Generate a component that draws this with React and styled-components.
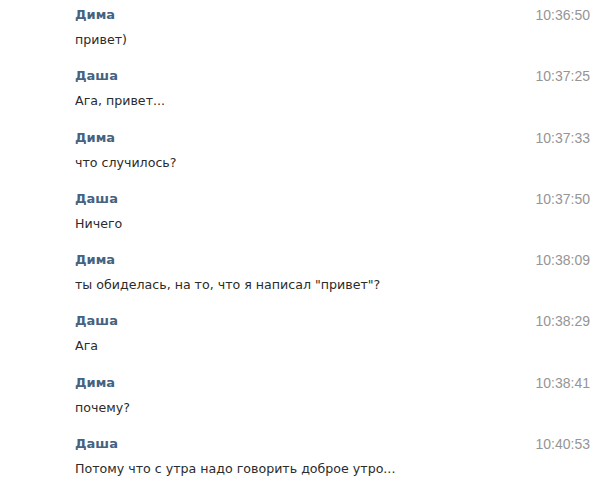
import { createGlobalStyle, styled } from 'styled-components'

const GlobalStyle = createGlobalStyle`
    body {
        margin: 0;
        background: #ffffff;
        font-family: "DejaVu Sans", "Liberation Sans", sans-serif;
    }
`

const messages = [
    { name: 'Дима', time: '10:36:50', text: 'привет)' },
    { name: 'Даша', time: '10:37:25', text: 'Ага, привет...' },
    { name: 'Дима', time: '10:37:33', text: 'что случилось?' },
    { name: 'Даша', time: '10:37:50', text: 'Ничего' },
    { name: 'Дима', time: '10:38:09', text: 'ты обиделась, на то, что я написал "привет"?' },
    { name: 'Даша', time: '10:38:29', text: 'Ага' },
    { name: 'Дима', time: '10:38:41', text: 'почему?' },
    { name: 'Даша', time: '10:40:53', text: 'Потому что с утра надо говорить доброе утро...' },
]

const Log = styled.div`
    width: 600px;
    height: 499px;
    overflow: hidden;
    padding: 7px 10px 0 75px;
    box-sizing: border-box;
`

const Message = styled.div`
    display: grid;
    grid-template-columns: 1fr auto;
    align-content: start;
    row-gap: 9px;
    height: 61.3px;
`

const Author = styled.div`
    font-size: 13px;
    font-weight: bold;
    color: #45627f;
    line-height: 16px;
`

const Time = styled.div`
    font-family: "Liberation Sans", sans-serif;
    font-size: 14px;
    color: #959595;
    line-height: 16px;
`

const Text = styled.div`
    grid-column: 1 / 3;
    font-size: 13px;
    color: #2b2b2b;
    line-height: 16px;
    transform: scaleX(0.97);
    transform-origin: left;
`

function App() {
    return (
        <>
            <GlobalStyle />
            <Log>
                {messages.map((m, i) => (
                    <Message key={i}>
                        <Author>{m.name}</Author>
                        <Time>{m.time}</Time>
                        <Text>{m.text}</Text>
                    </Message>
                ))}
            </Log>
        </>
    )
}

export default App
